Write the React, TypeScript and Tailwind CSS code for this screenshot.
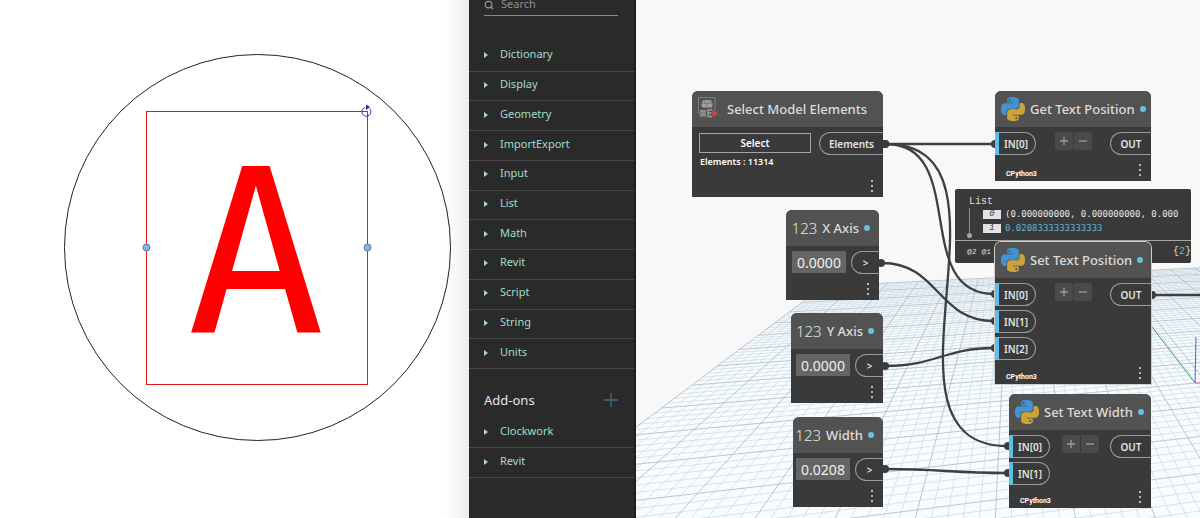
import type { ReactNode } from 'react';
import { Search } from 'lucide-react';

type Point = [number, number];

const LIBRARY = [
  'Dictionary',
  'Display',
  'Geometry',
  'ImportExport',
  'Input',
  'List',
  'Math',
  'Revit',
  'Script',
  'String',
  'Units',
];

const ADD_ONS = ['Clockwork', 'Revit'];

const WIRES: { from: Point; to: Point }[] = [
  { from: [250, 144], to: [358, 144] },
  { from: [250, 144], to: [358, 294] },
  { from: [250, 144], to: [371, 446] },
  { from: [246, 263], to: [358, 321] },
  { from: [250, 366], to: [358, 348] },
  { from: [250, 469], to: [371, 473] },
];

// Ground plane: both line families run to a vanishing point on one horizon.
const HORIZON = 143;
const DEPTH_VP: Point = [378, HORIZON];
const SIDE_VP: Point = [3154, HORIZON];
const EDGE_SLOPE = 0.752;
const BASE_Y = 518;
const CELL = 16;

function edgePoint(row: number): Point {
  const y = HORIZON + 1 / (0.00699 - row * 0.0000715);
  return [DEPTH_VP[0] - (y - HORIZON) / EDGE_SLOPE, y];
}

function farPoint(col: number): Point {
  const [ex, ey] = edgePoint(0);
  const far = (SIDE_VP[1] - ey) / (SIDE_VP[0] - ex);
  const baseX = DEPTH_VP[0] - (BASE_Y - HORIZON) / EDGE_SLOPE + col * CELL;
  const k = (baseX - DEPTH_VP[0]) / (BASE_Y - HORIZON);
  const y = (ey + far * (DEPTH_VP[0] - k * HORIZON - ex)) / (1 - far * k);
  return [DEPTH_VP[0] + k * (y - HORIZON), y];
}

const ROWS = Array.from({ length: 76 }, (_, i) => edgePoint(i));
const COLS = Array.from({ length: 76 }, (_, i) => farPoint(i));

function lineStyle(index: number) {
  return index % 5 === 0
    ? { stroke: '#b5bdc6', strokeWidth: 0.9 }
    : { stroke: '#c6dae4', strokeWidth: 0.7 };
}

function Ground() {
  const corner = edgePoint(0);
  const near = edgePoint(75);
  return (
    <svg aria-hidden="true" className="absolute inset-0 h-full w-full">
      <polygon
        fill="#f9fcfe"
        points={`${corner} ${near} 900,1200 ${COLS[75]}`}
      />
      {ROWS.map(([x, y], i) => (
        <line key={`r${i}`} x1={x} y1={y} x2={SIDE_VP[0]} y2={SIDE_VP[1]} {...lineStyle(i)} />
      ))}
      {COLS.map(([x, y], i) => (
        <line
          key={`c${i}`}
          x1={x}
          y1={y}
          x2={DEPTH_VP[0] + (x - DEPTH_VP[0]) * 12}
          y2={HORIZON + (y - HORIZON) * 12}
          {...lineStyle(i)}
        />
      ))}
      <line x1="516" y1="327" x2="559" y2="383" stroke="#4c9a55" />
      <line x1="560" y1="337" x2="559" y2="383" stroke="#5a5ae0" />
      <line x1="559" y1="383" x2="900" y2="380" stroke="#f06a6a" />
    </svg>
  );
}

function wirePath([x1, y1]: Point, [x2, y2]: Point) {
  const bend = Math.hypot(x2 - x1, y2 - y1) * 0.45;
  return `M${x1} ${y1}C${x1 + bend} ${y1} ${x2 - bend} ${y2} ${x2} ${y2}`;
}

function Wires() {
  return (
    <svg aria-hidden="true" className="absolute inset-0 h-full w-full" fill="none">
      {WIRES.map(({ from, to }) => (
        <g key={`${from}-${to}`}>
          <path d={wirePath(from, to)} stroke="#3f3f3f" strokeWidth="2.3" />
          <circle cx={from[0] - 1} cy={from[1]} r="4" fill="#3c3c3c" />
          <circle cx={to[0] + 1} cy={to[1]} r="4" fill="#3c3c3c" />
        </g>
      ))}
      <circle cx="516" cy="295" r="4" fill="#3c3c3c" />
      <path d="M516 295H2000" stroke="#3f3f3f" strokeWidth="2.3" />
    </svg>
  );
}

const SNAKE =
  'M14.25.18l.9.2.73.26.59.3.45.32.34.34.25.34.16.33.1.3.04.26.02.2-.01.13V8.5l-.05.63-.13.55-.21.46-.26.38-.3.31-.33.25-.35.19-.35.14-.33.1-.3.07-.26.04-.21.02H8.77l-.69.05-.59.14-.5.22-.41.27-.33.32-.27.35-.2.36-.15.37-.1.35-.07.32-.04.27-.02.21v3.06H3.17l-.21-.03-.28-.07-.32-.12-.35-.18-.36-.26-.36-.36-.35-.46-.32-.59-.28-.73-.21-.88-.14-1.05-.05-1.23.06-1.22.16-1.04.24-.87.32-.71.36-.57.4-.44.42-.33.42-.24.4-.16.36-.1.32-.05.24-.01h.16l.06.01h8.16v-.83H6.18l-.01-2.75-.02-.37.05-.34.11-.31.17-.28.25-.26.31-.23.38-.2.44-.18.51-.15.58-.12.64-.1.71-.06.77-.04.84-.02 1.27.05zm-6.3 1.98l-.23.33-.08.41.08.41.23.34.33.22.41.09.41-.09.33-.22.23-.34.08-.41-.08-.41-.23-.33-.33-.22-.41-.09-.41.09z';

function PythonLogo() {
  return (
    <svg aria-hidden="true" className="size-6 shrink-0" viewBox="0 0 24 24">
      <path d={SNAKE} fill="#4391cf" />
      <path d={SNAKE} fill="#c9a43a" transform="rotate(180 12 12)" />
    </svg>
  );
}

function SelectIcon() {
  return (
    <svg aria-hidden="true" className="size-6 shrink-0" viewBox="0 0 24 24" fill="none">
      <path d="M.5 17V.5h16.5V13" stroke="#808080" />
      <path d="M3.5 9V6.5l2-3.500h7l2 3.500V9l-1 1.500h-9z" fill="#a0a0a0" />
      <path d="M3.5 6.500h11M7 3.500v3M11 3.500v3M9 6.500v4" stroke="#6e6e6e" strokeWidth=".7" />
      <path d="M2 13h6v6.500H2z" fill="#8c8c8c" />
      <path d="M2 16h6" stroke="#6e6e6e" strokeWidth=".7" />
      <path d="M14 13h-4v6.500h4M10 16h3.500" stroke="#9a9a9a" strokeWidth="1.4" />
      <path d="M14 12l6.500 5-3 .8-2.700 3z" fill="#d64545" />
    </svg>
  );
}

function StatusDot() {
  return <span className="size-[6px] shrink-0 rounded-full bg-[#6ac0e7]" />;
}

function NodeFooter({ children }: { children?: ReactNode }) {
  return (
    <footer className="mt-auto flex h-[22px] items-center pr-[7px] pl-[11px]">
      {children}
      <button
        aria-label="More"
        className="ml-auto flex h-4 w-2 flex-col items-center justify-center gap-[3px]"
        type="button"
      >
        <span className="size-[2px] bg-[#b8b8b8]" />
        <span className="size-[2px] bg-[#b8b8b8]" />
        <span className="size-[2px] bg-[#b8b8b8]" />
      </button>
    </footer>
  );
}

function InPort({ label }: { label: string }) {
  return (
    <div className="flex h-[23px] border-l-4 border-[#5bbfea]">
      <span className="flex w-[37px] items-center justify-center rounded-r-full border border-l-0 border-[#9a9a9a] pr-[2px]">
        {label}
      </span>
    </div>
  );
}

function OutPort({ label, className }: { label: string; className: string }) {
  return (
    <div
      className={`flex h-[23px] shrink-0 items-center justify-center rounded-l-full border border-r-0 border-[#9a9a9a] ${className}`}
    >
      {label}
    </div>
  );
}

interface NodeProps {
  title: string;
  icon: ReactNode;
  className: string;
  headerClassName?: string;
  dot?: boolean;
  children: ReactNode;
}

function Node({ title, icon, className, headerClassName = 'gap-[5px] px-[6px]', dot = true, children }: NodeProps) {
  return (
    <article
      className={`absolute flex flex-col rounded-t-md bg-[#3a3a3a] text-[10px] leading-3 font-semibold text-[#e4e4e4] ${className}`}
    >
      <header className={`flex h-9 shrink-0 items-center rounded-t-md bg-[#525252] ${headerClassName}`}>
        {icon}
        <h3 className="text-[13px] leading-4 font-medium whitespace-nowrap text-[#dcdcdc]">{title}</h3>
        {dot ? <StatusDot /> : null}
      </header>
      {children}
    </article>
  );
}

function PythonNode({ title, inputs, className }: { title: string; inputs: string[]; className: string }) {
  return (
    <Node className={className} icon={<PythonLogo />} title={title}>
      <div className="flex items-start justify-between pt-[5px]">
        <div className="space-y-1">
          {inputs.map((input) => (
            <InPort key={input} label={input} />
          ))}
        </div>
        <div className="flex gap-px text-[#9c9c9c]">
          {['Add input', 'Remove input'].map((label, index) => (
            <button
              key={label}
              aria-label={label}
              className="flex h-[18px] w-[18px] items-center justify-center rounded-xs bg-[#4a4a4a]"
              type="button"
            >
              <svg aria-hidden="true" className="size-2" viewBox="0 0 8 8" stroke="currentColor" strokeWidth="1.3">
                <path d={index === 0 ? 'M0 4h8M4 0v8' : 'M0 4h8'} />
              </svg>
            </button>
          ))}
        </div>
        <OutPort className="w-[41px]" label="OUT" />
      </div>
      <NodeFooter>
        <span className="self-end pb-px font-['Roboto',sans-serif] text-[7px] font-bold text-white">CPython3</span>
      </NodeFooter>
    </Node>
  );
}

function NumberNode({ title, value, className }: { title: string; value: string; className: string }) {
  return (
    <Node
      className={className}
      headerClassName="justify-end gap-[5px] pr-[9px]"
      icon={<span className="text-[15px] leading-4 font-light">123</span>}
      title={title}
    >
      <div className="flex justify-end gap-[5px] pt-[5px]">
        <input
          aria-label={title}
          className="h-[22px] w-[54px] min-w-0 bg-[#656565] text-center text-[14px] font-normal text-[#f0f0f0]"
          defaultValue={value}
        />
        <OutPort className="w-7" label=">" />
      </div>
      <NodeFooter />
    </Node>
  );
}

function SelectNode() {
  return (
    <Node
      className="top-[91px] left-[56px] h-[106px] w-[191px]"
      dot={false}
      icon={<SelectIcon />}
      title="Select Model Elements"
    >
      <div className="flex justify-between pt-[5px] pl-[7px]">
        <div className="w-28">
          <button className="mt-px h-5 w-full border border-[#a5a5a5] text-white" type="button">
            Select
          </button>
          <p className="mt-[3px] pl-px text-[9px] text-white">Elements : 11314</p>
        </div>
        <OutPort className="w-16" label="Elements" />
      </div>
      <NodeFooter />
    </Node>
  );
}

function ListPreview() {
  const rows = [
    { value: '(0.000000000, 0.000000000, 0.000', color: 'text-[#e8e8e8]' },
    { value: '0.0208333333333333', color: 'text-[#5fb4d4]' },
  ];
  return (
    <section className="absolute top-[189px] left-[319px] w-[236px] rounded-xs bg-[#3a3a3a] font-['Liberation_Mono',monospace] text-[10px] leading-3 text-[#dcdcdc]">
      <div className="h-[52px] border-b border-[#a5a5a5] pt-[7px] pl-[14px]">
        <p>List</p>
        <div className="relative flex flex-col gap-[2px] border-l border-[#8a8a8a] pb-1 pl-[13px]">
          {rows.map((row, index) => (
            <div key={row.value} className="flex items-center gap-1">
              <span className="h-[9px] w-[18px] shrink-0 bg-[#e2e2e2] text-center text-[9px] leading-[9px] text-[#444] italic">
                {index}
              </span>
              <span className={`font-['DejaVu_Sans_Mono',monospace] text-[9px] whitespace-nowrap ${row.color}`}>
                {row.value}
              </span>
            </div>
          ))}
          <span className="absolute bottom-0 -left-[3px] size-[5px] rounded-full bg-[#a5a5a5]" />
        </div>
      </div>
      <div className="flex h-[22px] items-center justify-between pl-3">
        <span className="text-[8px]">@2 @1</span>
        <span>
          {'{'}
          <span className="text-[#5fb4d4]">2</span>
          {'}'}
        </span>
      </div>
    </section>
  );
}

function LibraryItem({ label }: { label: string }) {
  return (
    <li className="flex border-b border-[#484848]">
      <button className="flex flex-1 items-center gap-3 pb-1 pl-[15px] text-left" type="button">
        <svg aria-hidden="true" className="mt-[2px] h-[6px] w-1" viewBox="0 0 4 6">
          <path d="M0 0l4 3-4 3z" fill="#a6d8c8" />
        </svg>
        {label}
      </button>
    </li>
  );
}

function LibraryPanel() {
  return (
    <aside className="border-r-2 border-[#1f1f1f] bg-[#2a2a2a] text-[11px] leading-4 text-[#a3dcc8]">
      <label className="mr-4 ml-[15px] flex h-4 items-start gap-[7px] border-b border-[#8a8a8a] text-[#8f8f8f]">
        <Search aria-hidden="true" className="size-[10px] shrink-0" strokeWidth={3} />
        <input
          aria-label="Search"
          className="-mt-1 h-4 w-full min-w-0 bg-transparent text-[11px] placeholder:text-[#8f8f8f]"
          placeholder="Search"
          type="search"
        />
      </label>
      <ul className="mt-[26px] grid h-[327px] auto-rows-fr">
        {LIBRARY.map((label) => (
          <LibraryItem key={label} label={label} />
        ))}
      </ul>
      <div className="mt-[23px] mr-4 ml-[15px] flex h-4 items-center justify-between">
        <h2 className="text-[13px] text-[#e6e6e6]">Add-ons</h2>
        <button aria-label="Add package" type="button">
          <svg aria-hidden="true" className="size-[14px]" viewBox="0 0 14 14" stroke="#3f6f80" strokeWidth="1.3">
            <path d="M7 0v14M0 7h14" />
          </svg>
        </button>
      </div>
      <ul className="mt-[10px] grid h-[60px] auto-rows-fr">
        {ADD_ONS.map((label) => (
          <LibraryItem key={label} label={label} />
        ))}
      </ul>
    </aside>
  );
}

function DrawingView() {
  return (
    <section className="relative flex min-w-0 items-start justify-center bg-white pt-[53px] pl-[45px]">
      <svg className="h-[390px] w-[390px] shrink-0" viewBox="62 53 390 390" fill="none">
        <circle cx="257.5" cy="247.5" r="193" stroke="#222" />
        <rect x="146.5" y="111.5" width="221" height="273" stroke="#e01b1b" />
        <text
          x="256"
          y="332"
          fill="#ff0000"
          textAnchor="middle"
          className="font-['DejaVu_Sans_Mono',monospace] text-[229px]"
        >
          A
        </text>
        <circle cx="146.5" cy="247.5" r="3.5" fill="#8fb2e0" stroke="#5f7896" />
        <circle cx="367.5" cy="247.5" r="3.5" fill="#8fb2e0" stroke="#5f7896" />
        <path d="M365 107.500a4.500 4.500 0 1 0 4.500 1" stroke="#2a3fb5" />
        <path d="M366 104.500l4 2.500-4 3z" fill="#1a2f9c" />
      </svg>
      <div className="absolute inset-y-0 right-0 w-8 bg-linear-to-r from-transparent via-black/2 to-black/8" />
    </section>
  );
}

export default function App() {
  return (
    <main className="grid min-h-screen grid-cols-[minmax(0,469fr)_167px_minmax(0,564fr)] overflow-hidden font-['Noto_Sans',sans-serif]">
      <DrawingView />
      <LibraryPanel />
      <section className="relative overflow-hidden bg-[#f8f8f8]">
        <Ground />
        <Wires />
        <SelectNode />
        <NumberNode className="top-[210px] left-[150px] h-[90px] w-[93px]" title="X Axis" value="0.0000" />
        <NumberNode className="top-[313px] left-[155px] h-[90px] w-[92px]" title="Y Axis" value="0.0000" />
        <NumberNode className="top-[417px] left-[157px] h-[90px] w-[90px]" title="Width" value="0.0208" />
        <PythonNode
          className="top-[91px] left-[359px] h-[90px] w-[156px]"
          inputs={['IN[0]']}
          title="Get Text Position"
        />
        <ListPreview />
        <PythonNode
          className="top-[242px] left-[359px] h-[142px] w-[156px] ring-1 ring-[#cfcfcf]"
          inputs={['IN[0]', 'IN[1]', 'IN[2]']}
          title="Set Text Position"
        />
        <PythonNode
          className="top-[394px] left-[373px] h-[114px] w-[142px]"
          inputs={['IN[0]', 'IN[1]']}
          title="Set Text Width"
        />
      </section>
    </main>
  );
}
